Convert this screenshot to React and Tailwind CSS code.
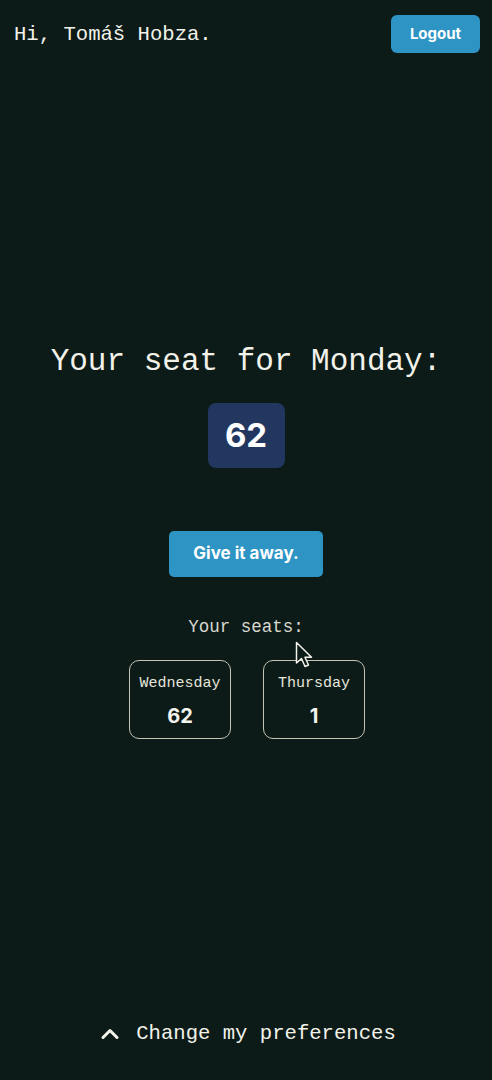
import { ChevronUp } from 'lucide-react';

const mono = { fontFamily: '"Liberation Mono", "DejaVu Sans Mono", monospace' };

const seats = [
  { day: 'Wednesday', seat: 62 },
  { day: 'Thursday', seat: 1 },
];

const SeatCard = ({ day, seat }) => (
  <div className="flex h-[79px] w-[102px] flex-col items-center rounded-[10px] border border-[#c4c4b4] pt-[12px]">
    <span className="text-[15px] leading-[22px] text-[#e6e6dc]" style={mono}>
      {day}
    </span>
    <span className="mt-[9px] font-['Inter',sans-serif] text-[20px] font-bold leading-[24px] text-[#f4f4ee]">
      {seat}
    </span>
  </div>
);

const App = () => {
  return (
    <div className="relative flex h-[1080px] flex-col bg-[#0c1b18] text-[#f2f2ea]">
      <header className="flex h-[68px] items-center justify-between pl-[14px] pr-[12px]">
        <span className="text-[20.6px] leading-[24px] pt-[2px]" style={mono}>
          Hi, Tomáš Hobza.
        </span>
        <button className="h-[38px] w-[89px] rounded-[6px] bg-[#2d94c4] font-['Inter',sans-serif] text-[15px] font-bold text-white">
          Logout
        </button>
      </header>

      <main className="flex flex-col items-center pt-[276px]">
        <h1 className="h-[36px] text-[31px] leading-[36px]" style={mono}>
          Your seat for Monday:
        </h1>
        <div className="mt-[23px] flex h-[65px] w-[77px] items-center justify-center rounded-[8px] bg-[#22375f] font-['Inter',sans-serif] text-[33px] font-bold text-white">
          62
        </div>
        <button className="mt-[63px] h-[46px] w-[154px] rounded-[5px] bg-[#2d94c4] font-['Inter',sans-serif] text-[17px] font-bold text-white">
          Give it away.
        </button>
        <p className="mt-[38px] text-[17.5px] leading-[24px] text-[#d8d8d0]" style={mono}>
          Your seats:
        </p>
        <div className="mt-[21px] flex gap-[32px] pl-[2px]">
          {seats.map((s) => (
            <SeatCard key={s.day} {...s} />
          ))}
        </div>
      </main>

      <footer className="mt-auto flex items-center justify-center gap-[12px] pb-[32px]">
        <ChevronUp size={28} strokeWidth={2.6} className="text-[#f2f2ea]" />
        <span className="text-[20.6px] leading-[24px]" style={mono}>
          Change my preferences
        </span>
      </footer>

      {/* mouse cursor captured in the screenshot */}
      <svg
        className="absolute left-[295px] top-[641px]"
        width="20"
        height="28"
        viewBox="0 0 20 28"
      >
        <path
          d="M1.5 1.5 L1.5 22 L6.5 17.5 L10 25.5 L13.5 24 L10 16.2 L16.5 16.2 Z"
          fill="#0c1b18"
          stroke="#f2f2ea"
          strokeWidth="1.5"
          strokeLinejoin="round"
        />
      </svg>
    </div>
  );
};

export default App;
